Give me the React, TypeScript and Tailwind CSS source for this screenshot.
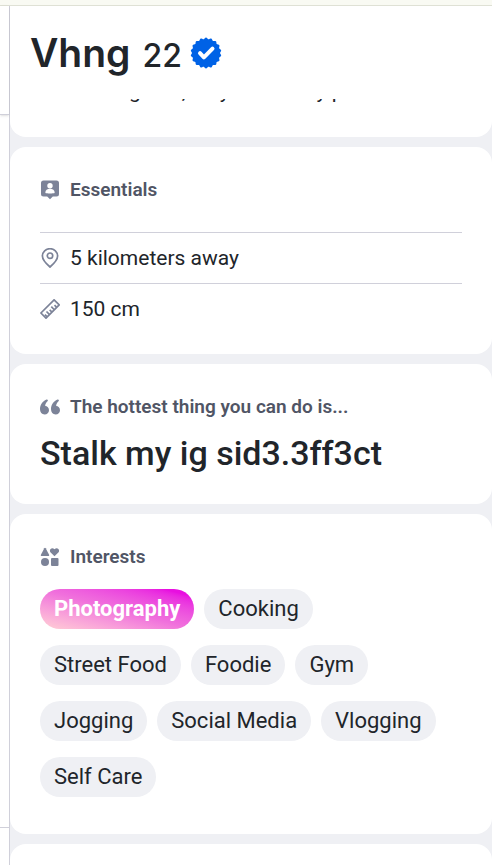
import type { ReactNode } from "react";
import { clsx } from "clsx";

const interests = [
  "Photography",
  "Cooking",
  "Street Food",
  "Foodie",
  "Gym",
  "Jogging",
  "Social Media",
  "Vlogging",
  "Self Care",
];

const sharedInterests = ["Photography"];

// 18 small rounded teeth around a circle
const badgePoints = Array.from({ length: 144 }, (_, i) => {
  const angle = (i / 144) * Math.PI * 2;
  const radius = 14.7 + 0.7 * Math.cos(angle * 18);
  return `${(16 + radius * Math.sin(angle)).toFixed(2)},${(16 - radius * Math.cos(angle)).toFixed(2)}`;
}).join(" ");

function VerifiedIcon() {
  return (
    <svg viewBox="0 0 32 32" className="size-8" role="img" aria-label="Verified">
      <polygon points={badgePoints} fill="#0062e6" />
      <path
        d="M10 16.200l3.900 4.200 8.600-8.800"
        fill="none"
        stroke="#fff"
        strokeWidth="4"
        strokeLinecap="round"
        strokeLinejoin="round"
      />
    </svg>
  );
}

function EssentialsIcon() {
  return (
    <svg viewBox="0 0 20 20" className="size-5 shrink-0" aria-hidden="true">
      <path
        d="M3.500.5h13a2.500 2.500 0 0 1 2.500 2.500v11a2.500 2.500 0 0 1-2.500 2.500h-3.700L10 19.200 7.200 16.500H3.500A2.500 2.500 0 0 1 1 14V3A2.500 2.500 0 0 1 3.500.5z"
        fill="#7c8398"
      />
      <circle cx="10" cy="5.800" r="2.700" fill="#fff" />
      <path d="M5.300 13.100c0-3 2-4.300 4.700-4.300s4.700 1.300 4.700 4.300c-1.400.6-8 .6-9.400 0z" fill="#fff" />
    </svg>
  );
}

function PinIcon() {
  return (
    <svg viewBox="0 0 20 20" className="size-5 shrink-0" fill="none" stroke="#7c8398" strokeWidth="1.700" aria-hidden="true">
      <path d="M10 19C6.500 16 2.400 12 2.400 8a7.600 7.300 0 0 1 15.200 0c0 4-4.100 8-7.600 11z" strokeLinejoin="round" />
      <circle cx="10" cy="7.700" r="2.700" />
    </svg>
  );
}

function RulerIcon() {
  return (
    <svg viewBox="0 0 20 20" className="size-5 shrink-0" fill="none" stroke="#7c8398" strokeWidth="1.700" aria-hidden="true">
      <path d="M.9 14L14.100.8l5.100 5.100L6 19.100z" strokeLinejoin="round" />
      <path d="M6.900 17.700l-2-2M9.300 15.300l-2.800-2.800M11.700 12.900l-2-2M14.100 10.500l-2.800-2.800M16.500 8.100l-2-2" />
    </svg>
  );
}

function QuoteIcon() {
  return (
    <svg viewBox="0 0 20 20" className="size-5 shrink-0" fill="#7c8398" aria-hidden="true">
      <path d="M6.500 2.600C2.300 4.500 0 8 0 12.300c0 3.100 1.800 5.100 4.600 5.100 2.500 0 4.400-1.700 4.400-4.200S7.300 9.100 5.200 9c0-2 .9-3.300 2.300-4.700.9-1 .1-2.100-1-1.700z" />
      <path d="M17.500 2.600C13.300 4.500 11 8 11 12.300c0 3.100 1.800 5.100 4.600 5.100 2.500 0 4.400-1.700 4.400-4.200S18.300 9.100 16.200 9c0-2 .9-3.300 2.300-4.700.9-1 .1-2.100-1-1.700z" />
    </svg>
  );
}

function ShapesIcon() {
  return (
    <svg viewBox="0 0 20 20" className="size-5 shrink-0" fill="#7c8398" aria-hidden="true">
      <path d="M4.300 1.300q.7-.9 1.400 0L9.200 8q.2.900-.6.900H1.400Q.6 8.900.8 8z" />
      <path d="M14.500 9.300L10.400 5.200C8.700 3 11.700-.3 14.500 2.200 17.300-.3 20.300 3 18.600 5.200z" />
      <circle cx="5" cy="14.900" r="4" />
      <rect x="11" y="11" width="7.500" height="8" rx="1" />
    </svg>
  );
}

function Card({ icon, title, children }: { icon: ReactNode; title: string; children: ReactNode }) {
  return (
    <section className="rounded-2xl bg-white px-[30px] pt-[33px]">
      <div className="flex h-5 items-center gap-[10px]">
        {icon}
        <h2 className="text-[19px] leading-5 font-semibold text-[#505565]">{title}</h2>
      </div>
      {children}
    </section>
  );
}

export default function App() {
  return (
    <div className="flex h-screen flex-col overflow-hidden bg-white font-['Roboto','Liberation_Sans',sans-serif] text-[#21252a]">
      <div className="h-[6px] shrink-0 border-b border-[#dfe1d5] bg-[#f9faf3]" />
      <div className="flex min-h-0 flex-1">
        <aside className="flex w-[10px] shrink-0 flex-col border-r border-[#d0d0da] bg-white">
          <div className="h-[109px] shrink-0 border-b border-[#d0d0da] shadow-sm" />
          <div className="flex-1 border-b border-[#d0d0da]" />
          <div className="h-[37px] shrink-0" />
        </aside>
        <main className="flex min-w-0 flex-1 flex-col gap-[10px] bg-[#eff0f4]">
          <section className="h-[131px] shrink-0 rounded-b-2xl bg-white">
            <header className="flex h-[93px] items-center gap-2 px-5">
              <h1 className="flex items-baseline gap-3 pt-1 font-['Inter',sans-serif] text-[39px] leading-10 font-semibold">
                Vhng <span className="text-[32px] font-medium">22</span>
              </h1>
              <VerifiedIcon />
            </header>
            {/* bio is scrolled under the header */}
            <div className="flex h-1 items-end overflow-hidden px-[30px]">
              <p className="text-[21px] leading-6 whitespace-nowrap">I have no game, only here to fly planes</p>
            </div>
          </section>

          <Card icon={<EssentialsIcon />} title="Essentials">
            <ul className="pt-8 pb-5 text-[21px] leading-[50px]">
              <li className="flex items-center gap-[10px] border-t border-[#d0d0da]">
                <PinIcon />5 kilometers away
              </li>
              <li className="flex items-center gap-[10px] border-t border-[#d0d0da]">
                <RulerIcon />
                150 cm
              </li>
            </ul>
          </Card>

          <Card icon={<QuoteIcon />} title="The hottest thing you can do is...">
            <p className="pt-4 pb-[31px] text-[34px] leading-10 font-medium">
              Stalk my ig sid3.3ff3ct
            </p>
          </Card>

          <Card icon={<ShapesIcon />} title="Interests">
            <ul className="flex flex-wrap gap-x-[10px] gap-y-4 pt-[22px] pb-[37px] text-[22px] leading-10">
              {interests.map((interest) => (
                <li
                  key={interest}
                  className={clsx(
                    "rounded-full px-[14px]",
                    sharedInterests.includes(interest)
                      ? "bg-linear-to-tr from-[#ffd0d4] via-[#f070dc] to-[#e80fe0] to-90% font-bold text-white"
                      : "bg-[#eff0f4]",
                  )}
                >
                  {interest}
                </li>
              ))}
            </ul>
          </Card>

          <section className="h-24 shrink-0 rounded-2xl bg-white" />
        </main>
      </div>
    </div>
  );
}
